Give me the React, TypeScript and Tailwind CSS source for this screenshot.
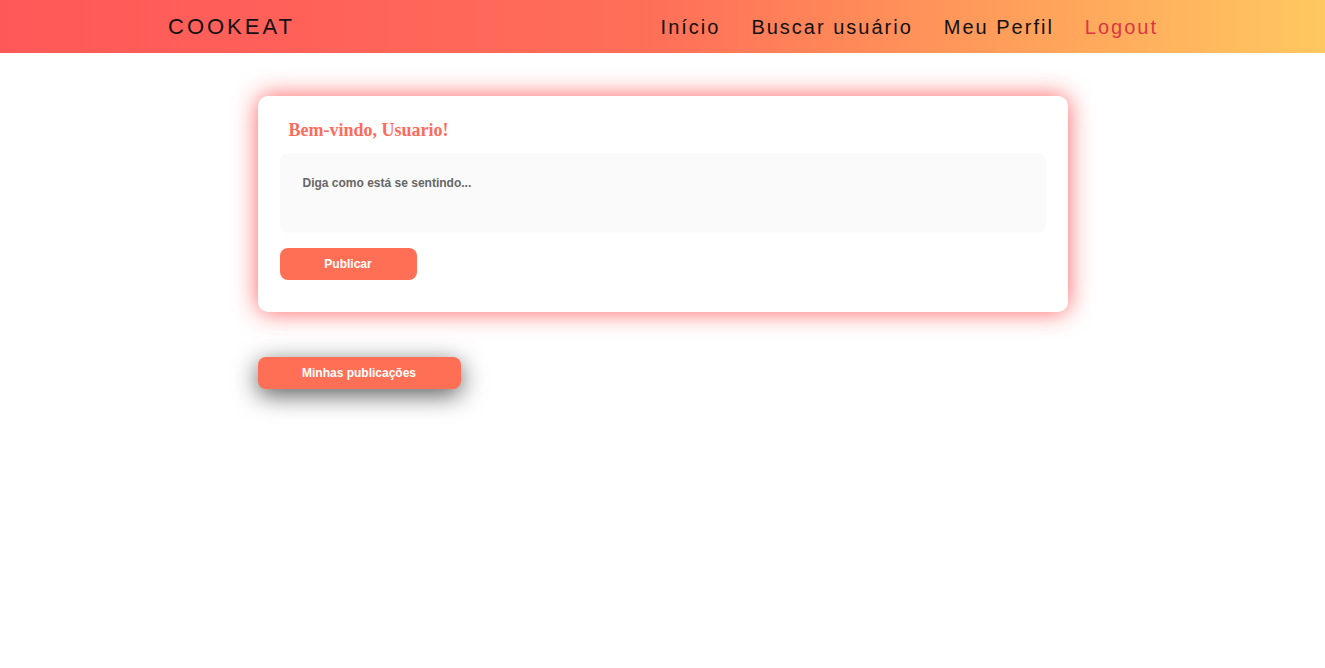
import React from "react";

export default function App() {
  return (
    <div className="min-h-screen bg-white" style={{ fontFamily: '"Liberation Sans", Arial, sans-serif' }}>
      <header className="h-[53px] w-full bg-[linear-gradient(to_right,#ff5858_0%,#ff6259_25%,#ff7058_50%,#ff9c5a_75%,#ffc860_100%)] flex items-center justify-between pl-[168px] pr-[167px]">
        <div className="text-[22px] tracking-[3px] text-[#111]">COOKEAT</div>
        <nav className="flex items-center gap-[30px] text-[20px] tracking-[2px]">
          <span className="text-[#111] mr-[1px]">Início</span>
          <span className="text-[#111] mr-[1px]">Buscar usuário</span>
          <span className="text-[#111] mr-[1px]">Meu Perfil</span>
          <span className="text-[#dc3545]">Logout</span>
        </nav>
      </header>

      <main className="w-[810px] mx-auto pt-[43px]">
        <div className="bg-white rounded-[10px] shadow-[0_0_24px_rgba(255,40,40,0.75)] px-[22px] pt-[22px] pb-[32px]">
          <h2
            className="text-[18px] font-bold text-[#ff6b5b] pl-[9px] leading-[24px]"
            style={{ fontFamily: '"Liberation Serif", "Times New Roman", serif' }}
          >
            Bem-vindo, Usuario!
          </h2>
          <div className="mt-[11px] h-[80px] rounded-[8px] bg-[#fafafa] px-[23px] pt-[21px] text-[12px] font-bold text-[#666]">
            Diga como está se sentindo...
          </div>
          <button className="mt-[15px] w-[137px] h-[32px] rounded-[8px] bg-[#ff6f56] text-white text-[12px] font-bold">
            Publicar
          </button>
        </div>

        <button className="mt-[45px] w-[203px] h-[32px] rounded-[8px] bg-[#ff6f56] text-white text-[12px] font-bold shadow-[0_6px_24px_rgba(0,0,0,0.65)]">
          Minhas publicações
        </button>
      </main>
    </div>
  );
}
